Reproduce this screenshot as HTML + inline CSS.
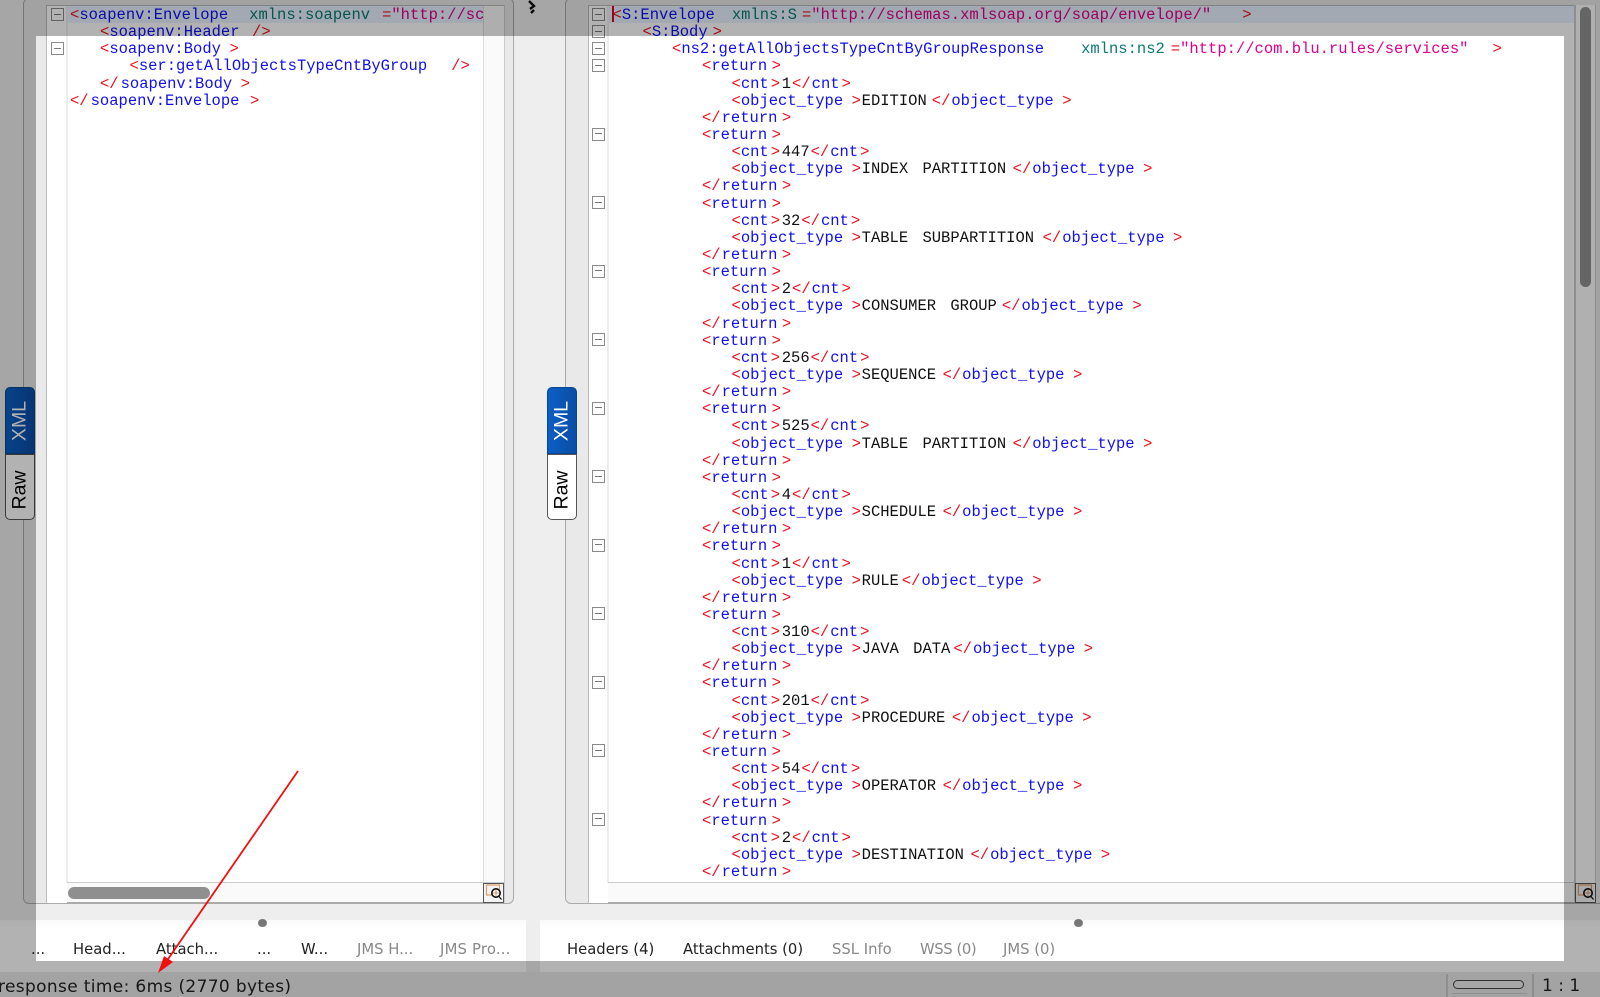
<!DOCTYPE html>
<html><head><meta charset="utf-8"><style>
html,body{margin:0;padding:0;width:1600px;height:997px;overflow:hidden;background:#eee}
div{position:absolute;box-sizing:border-box}
.code{font:15.5px/17.15px "Liberation Mono",monospace;color:#111}
.code p{margin:0;height:17.15px;position:relative;white-space:pre}
b{font-weight:normal;color:#f01020}
i{font-style:normal;color:#1010f0}
u{text-decoration:none;color:#0a7a72}
em{font-style:normal;color:#e0008c}
.a1{padding-left:30px}.a2{padding-left:59.5px}.a3{padding-left:89.5px}.a4{padding-left:119px}
.c{margin-left:2px}.r{margin-left:4.5px}.o{margin-left:8.5px}.t{margin-left:1px}.e{margin-left:5px}.n{margin-left:3px}.p{margin-left:6.5px}
.a4 i:not(:nth-of-type(1)){margin-left:1px}
.a4 b:nth-of-type(2){margin-right:.7px}
.x{word-spacing:5px}
.fold{width:13px;height:13px;border:1.5px solid #8a8a8a;background:#fff}
.fold:after{content:"";position:absolute;left:2px;right:2px;top:4.5px;height:1px;background:#777}
.tab{font:14.8px/20px "DejaVu Sans",sans-serif;color:#222;white-space:pre;transform-origin:0 50%}
.off{color:#888}
.vt{font:19.5px/24px "Liberation Sans",sans-serif;transform:rotate(-90deg);white-space:pre;text-align:center}
</style></head><body>

<!-- left panel -->
<div style="left:23px;top:-2px;width:491px;height:906px;background:#e9e9e9;border:1.5px solid #aaa;border-radius:6px"></div>
<div style="left:46px;top:5px;width:459px;height:898px;background:#fff;border-left:1.5px solid #bbb;border-right:1px solid #ccc;border-top:1px solid #bbb"></div>
<div style="left:66px;top:6px;width:1.5px;height:877px;background:#eee"></div>
<div style="left:483px;top:6px;width:21px;height:877px;background:#fafafa;border-left:1.5px solid #ddd"></div>
<div style="left:67px;top:882px;width:437px;height:21px;background:#fafafa;border-top:1.5px solid #ccc;border-bottom:1.5px solid #aaa"></div>
<div style="left:68px;top:887px;width:142px;height:12px;background:#8f8f8f;border-radius:6px"></div>
<div style="left:68px;top:6px;width:415px;height:17px;background:#e8f2ff"></div>
<div class="fold" style="left:51px;top:8px"></div>
<div class="fold" style="left:51px;top:42px"></div>
<div class="code" style="left:70px;top:7px;width:413px;height:875px;overflow:hidden">
<p><b>&lt;</b><i>soapenv:Envelope</i><u style="margin-left:21px">xmlns:soapenv</u><b style="margin-left:12px">=</b><em>"http://schemas.xmlsoap.org/soap/envelope/"</em></p>
<p class="a1"><b>&lt;</b><i>soapenv:Header</i><b style="margin-left:12.5px">/&gt;</b></p>
<p class="a1"><b>&lt;</b><i>soapenv:Body</i><b style="margin-left:8.5px">&gt;</b></p>
<p class="a2"><b>&lt;</b><i>ser:getAllObjectsTypeCntByGroup</i><b style="margin-left:24px">/&gt;</b></p>
<p class="a1"><b>&lt;/</b><i style="margin-left:2px">soapenv:Body</i><b style="margin-left:8.5px">&gt;</b></p>
<p><b>&lt;/</b><i style="margin-left:2px">soapenv:Envelope</i><b style="margin-left:10.5px">&gt;</b></p>
</div>
<div style="left:483px;top:883px;width:21px;height:20px;border:1.5px solid #555;background:#f4f4f4"><svg width="19" height="18" style="position:absolute;left:0;top:0"><rect x="2.5" y="1" width="13" height="10" fill="none" stroke="#d8a070" stroke-width="1.2"/><circle cx="12" cy="9" r="4.2" fill="#fff" stroke="#111" stroke-width="1.6"/><path d="M8.5 9h7M12 5.5v7" stroke="#c08050" stroke-width=".8"/><path d="M15 12.5l2.5 3" stroke="#111" stroke-width="1.2"/></svg></div>

<!-- left tabs XML/Raw -->
<div style="left:5px;top:387px;width:30px;height:67px;background:linear-gradient(90deg,#0b5fc4,#0a4da6);border:1px solid #0a4590;border-radius:5px 5px 0 0"></div>
<div class="vt" style="left:-14.5px;top:409px;width:67px;color:#fff">XML</div>
<div style="left:5px;top:454px;width:30px;height:66px;background:#fff;border:1.5px solid #555;border-radius:0 0 5px 5px"></div>
<div class="vt" style="left:-14.5px;top:478px;width:67px;color:#000">Raw</div>

<!-- right panel -->
<div style="left:564.5px;top:-2px;width:1040px;height:906px;background:#e9e9e9;border:1.5px solid #aaa;border-radius:6px"></div>
<div style="left:587.5px;top:5px;width:990px;height:898px;background:#fff;border-left:1.5px solid #bbb;border-top:1px solid #bbb"></div>
<div style="left:607px;top:6px;width:1.5px;height:877px;background:#eee"></div>
<div style="left:1574px;top:5px;width:22px;height:898px;background:#fcfcfc;border-left:2px solid #ccc;border-right:1.5px solid #ccc"></div>
<div style="left:1580px;top:7px;width:11px;height:280px;background:#919191;border-radius:6px"></div>
<div style="left:608px;top:882px;width:966px;height:21px;background:#fafafa;border-top:1.5px solid #ccc;border-bottom:1.5px solid #aaa"></div>
<div style="left:608px;top:6px;width:966px;height:17px;background:#e8f2ff"></div>
<div class="fold" style="left:592px;top:8px"></div>
<div class="fold" style="left:592px;top:25px"></div>
<div class="fold" style="left:592px;top:42px"></div>
<div class="fold" style="left:592px;top:59px"></div>
<div class="fold" style="left:592px;top:127.5px"></div>
<div class="fold" style="left:592px;top:196px"></div>
<div class="fold" style="left:592px;top:264.5px"></div>
<div class="fold" style="left:592px;top:333px"></div>
<div class="fold" style="left:592px;top:401.5px"></div>
<div class="fold" style="left:592px;top:470px"></div>
<div class="fold" style="left:592px;top:538.5px"></div>
<div class="fold" style="left:592px;top:607px"></div>
<div class="fold" style="left:592px;top:675.5px"></div>
<div class="fold" style="left:592px;top:744px"></div>
<div class="fold" style="left:592px;top:812.5px"></div>
<div class="code" style="left:612.5px;top:7px;width:960px;height:875px;overflow:hidden">
<p><b>&lt;</b><i>S:Envelope</i><u style="margin-left:17px">xmlns:S</u><b style="margin-left:5px">=</b><em>"http://schemas.xmlsoap.org/soap/envelope/"</em><b style="margin-left:31px">&gt;</b></p>
<p class="a1"><b>&lt;</b><i>S:Body</i><b style="margin-left:5px">&gt;</b></p>
<p class="a2"><b>&lt;</b><i>ns2:getAllObjectsTypeCntByGroupResponse</i><u style="margin-left:37px">xmlns:ns2</u><b style="margin-left:6px">=</b><em>"http://com.blu.rules/services"</em><b style="margin-left:24px">&gt;</b></p>
<p class="a3"><b>&lt;</b><i>return</i><b class="r">&gt;</b></p>
<p class="a4"><b>&lt;</b><i>cnt</i><b class="c">&gt;</b><span class="t">1</span><b class="t">&lt;/</b><i>cnt</i><b class="c">&gt;</b></p>
<p class="a4"><b>&lt;</b><i>object_type</i><b class="o">&gt;</b>EDITION<b class="e">&lt;/</b><i>object_type</i><b class="o">&gt;</b></p>
<p class="a3"><b>&lt;/</b><i class="t">return</i><b class="r">&gt;</b></p>
<p class="a3"><b>&lt;</b><i>return</i><b class="r">&gt;</b></p>
<p class="a4"><b>&lt;</b><i>cnt</i><b class="c">&gt;</b><span class="t">447</span><b class="t">&lt;/</b><i>cnt</i><b class="c">&gt;</b></p>
<p class="a4"><b>&lt;</b><i>object_type</i><b class="o">&gt;</b><span class="x">INDEX PARTITION</span><b class="p">&lt;/</b><i>object_type</i><b class="o">&gt;</b></p>
<p class="a3"><b>&lt;/</b><i class="t">return</i><b class="r">&gt;</b></p>
<p class="a3"><b>&lt;</b><i>return</i><b class="r">&gt;</b></p>
<p class="a4"><b>&lt;</b><i>cnt</i><b class="c">&gt;</b><span class="t">32</span><b class="t">&lt;/</b><i>cnt</i><b class="c">&gt;</b></p>
<p class="a4"><b>&lt;</b><i>object_type</i><b class="o">&gt;</b><span class="x">TABLE SUBPARTITION</span><b class="o">&lt;/</b><i>object_type</i><b class="o">&gt;</b></p>
<p class="a3"><b>&lt;/</b><i class="t">return</i><b class="r">&gt;</b></p>
<p class="a3"><b>&lt;</b><i>return</i><b class="r">&gt;</b></p>
<p class="a4"><b>&lt;</b><i>cnt</i><b class="c">&gt;</b><span class="t">2</span><b class="t">&lt;/</b><i>cnt</i><b class="c">&gt;</b></p>
<p class="a4"><b>&lt;</b><i>object_type</i><b class="o">&gt;</b><span class="x">CONSUMER GROUP</span><b class="e">&lt;/</b><i>object_type</i><b class="o">&gt;</b></p>
<p class="a3"><b>&lt;/</b><i class="t">return</i><b class="r">&gt;</b></p>
<p class="a3"><b>&lt;</b><i>return</i><b class="r">&gt;</b></p>
<p class="a4"><b>&lt;</b><i>cnt</i><b class="c">&gt;</b><span class="t">256</span><b class="t">&lt;/</b><i>cnt</i><b class="c">&gt;</b></p>
<p class="a4"><b>&lt;</b><i>object_type</i><b class="o">&gt;</b>SEQUENCE<b class="p">&lt;/</b><i>object_type</i><b class="o">&gt;</b></p>
<p class="a3"><b>&lt;/</b><i class="t">return</i><b class="r">&gt;</b></p>
<p class="a3"><b>&lt;</b><i>return</i><b class="r">&gt;</b></p>
<p class="a4"><b>&lt;</b><i>cnt</i><b class="c">&gt;</b><span class="t">525</span><b class="t">&lt;/</b><i>cnt</i><b class="c">&gt;</b></p>
<p class="a4"><b>&lt;</b><i>object_type</i><b class="o">&gt;</b><span class="x">TABLE PARTITION</span><b class="p">&lt;/</b><i>object_type</i><b class="o">&gt;</b></p>
<p class="a3"><b>&lt;/</b><i class="t">return</i><b class="r">&gt;</b></p>
<p class="a3"><b>&lt;</b><i>return</i><b class="r">&gt;</b></p>
<p class="a4"><b>&lt;</b><i>cnt</i><b class="c">&gt;</b><span class="t">4</span><b class="t">&lt;/</b><i>cnt</i><b class="c">&gt;</b></p>
<p class="a4"><b>&lt;</b><i>object_type</i><b class="o">&gt;</b>SCHEDULE<b class="p">&lt;/</b><i>object_type</i><b class="o">&gt;</b></p>
<p class="a3"><b>&lt;/</b><i class="t">return</i><b class="r">&gt;</b></p>
<p class="a3"><b>&lt;</b><i>return</i><b class="r">&gt;</b></p>
<p class="a4"><b>&lt;</b><i>cnt</i><b class="c">&gt;</b><span class="t">1</span><b class="t">&lt;/</b><i>cnt</i><b class="c">&gt;</b></p>
<p class="a4"><b>&lt;</b><i>object_type</i><b class="o">&gt;</b>RULE<b class="n">&lt;/</b><i>object_type</i><b class="o">&gt;</b></p>
<p class="a3"><b>&lt;/</b><i class="t">return</i><b class="r">&gt;</b></p>
<p class="a3"><b>&lt;</b><i>return</i><b class="r">&gt;</b></p>
<p class="a4"><b>&lt;</b><i>cnt</i><b class="c">&gt;</b><span class="t">310</span><b class="t">&lt;/</b><i>cnt</i><b class="c">&gt;</b></p>
<p class="a4"><b>&lt;</b><i>object_type</i><b class="o">&gt;</b><span class="x">JAVA DATA</span><b class="n">&lt;/</b><i>object_type</i><b class="o">&gt;</b></p>
<p class="a3"><b>&lt;/</b><i class="t">return</i><b class="r">&gt;</b></p>
<p class="a3"><b>&lt;</b><i>return</i><b class="r">&gt;</b></p>
<p class="a4"><b>&lt;</b><i>cnt</i><b class="c">&gt;</b><span class="t">201</span><b class="t">&lt;/</b><i>cnt</i><b class="c">&gt;</b></p>
<p class="a4"><b>&lt;</b><i>object_type</i><b class="o">&gt;</b>PROCEDURE<b class="p">&lt;/</b><i>object_type</i><b class="o">&gt;</b></p>
<p class="a3"><b>&lt;/</b><i class="t">return</i><b class="r">&gt;</b></p>
<p class="a3"><b>&lt;</b><i>return</i><b class="r">&gt;</b></p>
<p class="a4"><b>&lt;</b><i>cnt</i><b class="c">&gt;</b><span class="t">54</span><b class="t">&lt;/</b><i>cnt</i><b class="c">&gt;</b></p>
<p class="a4"><b>&lt;</b><i>object_type</i><b class="o">&gt;</b>OPERATOR<b class="p">&lt;/</b><i>object_type</i><b class="o">&gt;</b></p>
<p class="a3"><b>&lt;/</b><i class="t">return</i><b class="r">&gt;</b></p>
<p class="a3"><b>&lt;</b><i>return</i><b class="r">&gt;</b></p>
<p class="a4"><b>&lt;</b><i>cnt</i><b class="c">&gt;</b><span class="t">2</span><b class="t">&lt;/</b><i>cnt</i><b class="c">&gt;</b></p>
<p class="a4"><b>&lt;</b><i>object_type</i><b class="o">&gt;</b>DESTINATION<b class="p">&lt;/</b><i>object_type</i><b class="o">&gt;</b></p>
<p class="a3"><b>&lt;/</b><i class="t">return</i><b class="r">&gt;</b></p>
</div>
<div style="left:611.5px;top:6px;width:2px;height:16px;background:#e00020"></div>
<div style="left:1575px;top:883px;width:21px;height:20px;border:1.5px solid #555;background:#f4f4f4"><svg width="19" height="18" style="position:absolute;left:0;top:0"><rect x="2.5" y="1" width="13" height="10" fill="none" stroke="#d8a070" stroke-width="1.2"/><circle cx="12" cy="9" r="4.2" fill="#fff" stroke="#111" stroke-width="1.6"/><path d="M8.5 9h7M12 5.5v7" stroke="#c08050" stroke-width=".8"/><path d="M15 12.5l2.5 3" stroke="#111" stroke-width="1.2"/></svg></div>

<!-- right XML/Raw -->
<div style="left:547px;top:387px;width:30px;height:67px;background:linear-gradient(90deg,#0b5fc4,#0a4da6);border:1px solid #0a4590;border-radius:5px 5px 0 0"></div>
<div class="vt" style="left:527.5px;top:409px;width:67px;color:#fff">XML</div>
<div style="left:547px;top:454px;width:30px;height:66px;background:#fff;border:1.5px solid #555;border-radius:0 0 5px 5px"></div>
<div class="vt" style="left:527.5px;top:478px;width:67px;color:#000">Raw</div>

<!-- splitter icon -->
<svg width="14" height="18" style="position:absolute;left:526px;top:0"><path d="M3 1l5 5-4 3" fill="none" stroke="#111" stroke-width="2.4"/><path d="M8 10l-3 3" fill="none" stroke="#111" stroke-width="2.4"/></svg>

<!-- tab bars -->
<div style="left:0;top:920px;width:526px;height:52px;background:linear-gradient(#f9f9f9,#fff 8px)"></div>
<div style="left:540px;top:920px;width:1060px;height:52px;background:linear-gradient(#f9f9f9,#fff 8px)"></div>
<div style="left:258px;top:919px;width:9px;height:8px;border-radius:50%;background:#777"></div>
<div style="left:1074px;top:919px;width:9px;height:8px;border-radius:50%;background:#777"></div>
<div class="tab" style="left:31px;top:940px">...</div>
<div class="tab" style="left:73px;top:940px">Head...</div>
<div class="tab" style="left:156px;top:940px">Attach...</div>
<div class="tab" style="left:257px;top:940px">...</div>
<div class="tab" style="left:301px;top:940px">W...</div>
<div class="tab off" style="left:357px;top:940px">JMS H...</div>
<div class="tab off" style="left:440px;top:940px;letter-spacing:.2px">JMS Pro...</div>
<div class="tab" style="left:567px;top:940px">Headers (4)</div>
<div class="tab" style="left:683px;top:940px">Attachments (0)</div>
<div class="tab off" style="left:832px;top:940px">SSL Info</div>
<div class="tab off" style="left:920px;top:940px;letter-spacing:-.4px">WSS (0)</div>
<div class="tab off" style="left:1003px;top:940px">JMS (0)</div>

<!-- status bar -->
<div style="left:0;top:972px;width:1600px;height:25px;background:#eaeaea"></div>
<div class="tab" style="left:-2px;top:977px;font-size:17px;letter-spacing:.35px">response time: 6ms (2770 bytes)</div>
<div style="left:1446px;top:974px;width:2px;height:23px;background:#ccc"></div>
<div style="left:1532px;top:974px;width:2px;height:23px;background:#ccc"></div>
<div style="left:1453px;top:980px;width:71px;height:8.5px;border:1.5px solid #444;border-radius:5px;background:#eee"></div>
<div style="left:1452px;top:993px;width:75px;height:1px;background:#ccc"></div>
<div style="left:1542px;top:976px;font:17px/20px 'DejaVu Sans',sans-serif;color:#222;white-space:pre">1 : 1</div>

<!-- spotlight overlay -->
<div style="left:36px;top:36px;width:1528px;height:925px;box-shadow:0 0 0 2000px rgba(0,0,0,.3)"></div>

<!-- arrow -->
<svg width="1600" height="997" style="position:absolute;left:0;top:0"><path d="M298 771L166 962" stroke="#f01010" stroke-width="1.8" fill="none"/><path d="M158 973l6-17 9 6z" fill="#f01010"/></svg>
</body></html>
